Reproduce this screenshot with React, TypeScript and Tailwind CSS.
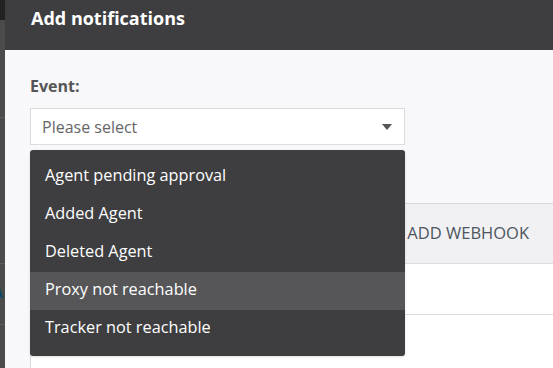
import React from "react";

const items = [
  "Agent pending approval",
  "Added Agent",
  "Deleted Agent",
  "Proxy not reachable",
  "Tracker not reachable",
];

export default function App() {
  return (
    <div
      className="flex h-[368px] w-[553px] overflow-hidden"
      style={{ fontFamily: '"Open Sans", "Noto Sans", sans-serif' }}
    >
      {/* dimmed page strip */}
      <div className="flex w-[5px] shrink-0 flex-col overflow-hidden bg-[#4b4b4b]">
        <div className="h-[20px] bg-[#222222]" />
        <div className="h-[98px] border-b border-[#5c5c5c]" />
        <div className="h-[146px] border-b border-[#5c5c5c]" />
        <div className="relative h-[61px] overflow-hidden border-b border-[#5c5c5c]">
          <span className="absolute left-[-8px] top-[20px] text-[16px] font-bold leading-none text-[#0b4d68]">
            A
          </span>
        </div>
        <div className="flex-1" />
      </div>

      {/* modal */}
      <div className="flex min-w-0 flex-1 flex-col">
        <div className="h-[50px] shrink-0 bg-[#3e3e40] pl-[26px] pt-[4px]">
          <h1 className="text-[18px] font-bold leading-[28px] text-white">
            Add notifications
          </h1>
        </div>
        <div className="relative flex flex-1 flex-col bg-[#f8f8fa] pl-[25px] pt-[26px]">
          <label className="mb-3 block h-5 text-[16px] font-bold leading-5 text-[#555555]">
            Event:
          </label>
          <div className="flex h-[37px] w-[375px] items-center justify-between border border-[#dcdcdc] bg-white pl-[11px] pr-[12px]">
            <span className="text-[16px] text-[#666666]">Please select</span>
            <svg width="10" height="6" viewBox="0 0 10 6">
              <path d="M0 0 H10 L5 6 Z" fill="#555555" />
            </svg>
          </div>

          <div className="mt-[58px] flex min-w-0 flex-1 flex-col border-l border-[#dcdcdc] bg-white">
            <div className="flex h-[61px] items-center justify-end border-y border-[#dcdcdc] bg-[#f1f1f3] pr-[24px]">
              <span className="text-[16.5px] text-[#4d5660]">ADD WEBHOOK</span>
            </div>
            <div className="h-[51px] border-b border-[#dcdcdc]" />
            <div className="flex-1" />
          </div>

          {/* dropdown menu */}
          <div className="absolute left-[25px] top-[100px] w-[375px] rounded-[3px] bg-[#3e3e40] py-[8px] shadow">
            {items.map((t, i) => (
              <div
                key={t}
                className={
                  "flex h-[38px] items-center px-[15px] pb-[3px] text-[16.3px] text-white " +
                  (i === 3 ? "bg-[#565658]" : "")
                }
              >
                {t}
              </div>
            ))}
          </div>
        </div>
      </div>
    </div>
  );
}
